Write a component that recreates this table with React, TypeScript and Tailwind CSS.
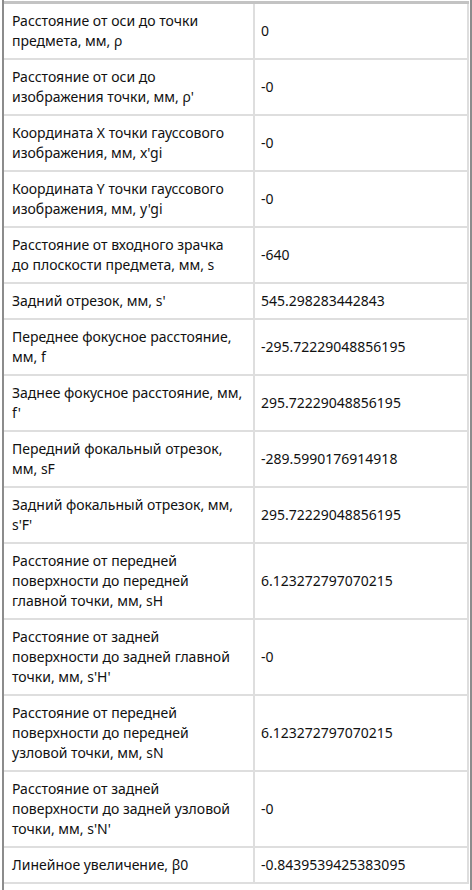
const rows: [string[], string][] = [
  [["Расстояние от оси до точки", "предмета, мм, ρ"], "0"],
  [["Расстояние от оси до", "изображения точки, мм, ρ'"], "-0"],
  [["Координата X точки гауссового", "изображения, мм, x'gi"], "-0"],
  [["Координата Y точки гауссового", "изображения, мм, y'gi"], "-0"],
  [["Расстояние от входного зрачка", "до плоскости предмета, мм, s"], "-640"],
  [["Задний отрезок, мм, s'"], "545.298283442843"],
  [["Переднее фокусное расстояние,", "мм, f"], "-295.72229048856195"],
  [["Заднее фокусное расстояние, мм,", "f'"], "295.72229048856195"],
  [["Передний фокальный отрезок,", "мм, sF"], "-289.5990176914918"],
  [["Задний фокальный отрезок, мм,", "s'F'"], "295.72229048856195"],
  [["Расстояние от передней", "поверхности до передней", "главной точки, мм, sH"], "6.123272797070215"],
  [["Расстояние от задней", "поверхности до задней главной", "точки, мм, s'H'"], "-0"],
  [["Расстояние от передней", "поверхности до передней", "узловой точки, мм, sN"], "6.123272797070215"],
  [["Расстояние от задней", "поверхности до задней узловой", "точки, мм, s'N'"], "-0"],
  [["Линейное увеличение, β0"], "-0.8439539425383095"],
];

export default function App() {
  return (
    <div className="h-[890px] w-[472px] bg-white pl-[2px] overflow-hidden">
      <div className="h-full border-l-2 border-r-2 border-[#8c8c8c] pt-[1px] font-['Noto_Sans','Open_Sans',sans-serif] text-[14px] leading-[20px] text-[#111]">
        <div className="border-t-[3px] border-[#c3c3c3] mr-[1px]">
          <table className="w-full border-collapse table-fixed">
            <colgroup>
              <col className="w-[250px]" />
              <col />
            </colgroup>
            <tbody>
              {rows.map(([label, value], i) => (
                <tr key={i} className="border-b-2 border-[#dedede]">
                  <td className="border-r-2 border-[#dedede] py-[7px] pl-[8px] pr-1 align-middle">
                    {label.map((l, j) => (
                      <div key={j} className="whitespace-nowrap">{l}</div>
                    ))}
                  </td>
                  <td className="border-r-2 border-[#dedede] py-[7px] pl-[6px] align-middle whitespace-nowrap">
                    {value}
                  </td>
                </tr>
              ))}
            </tbody>
          </table>
        </div>
      </div>
    </div>
  );
}
